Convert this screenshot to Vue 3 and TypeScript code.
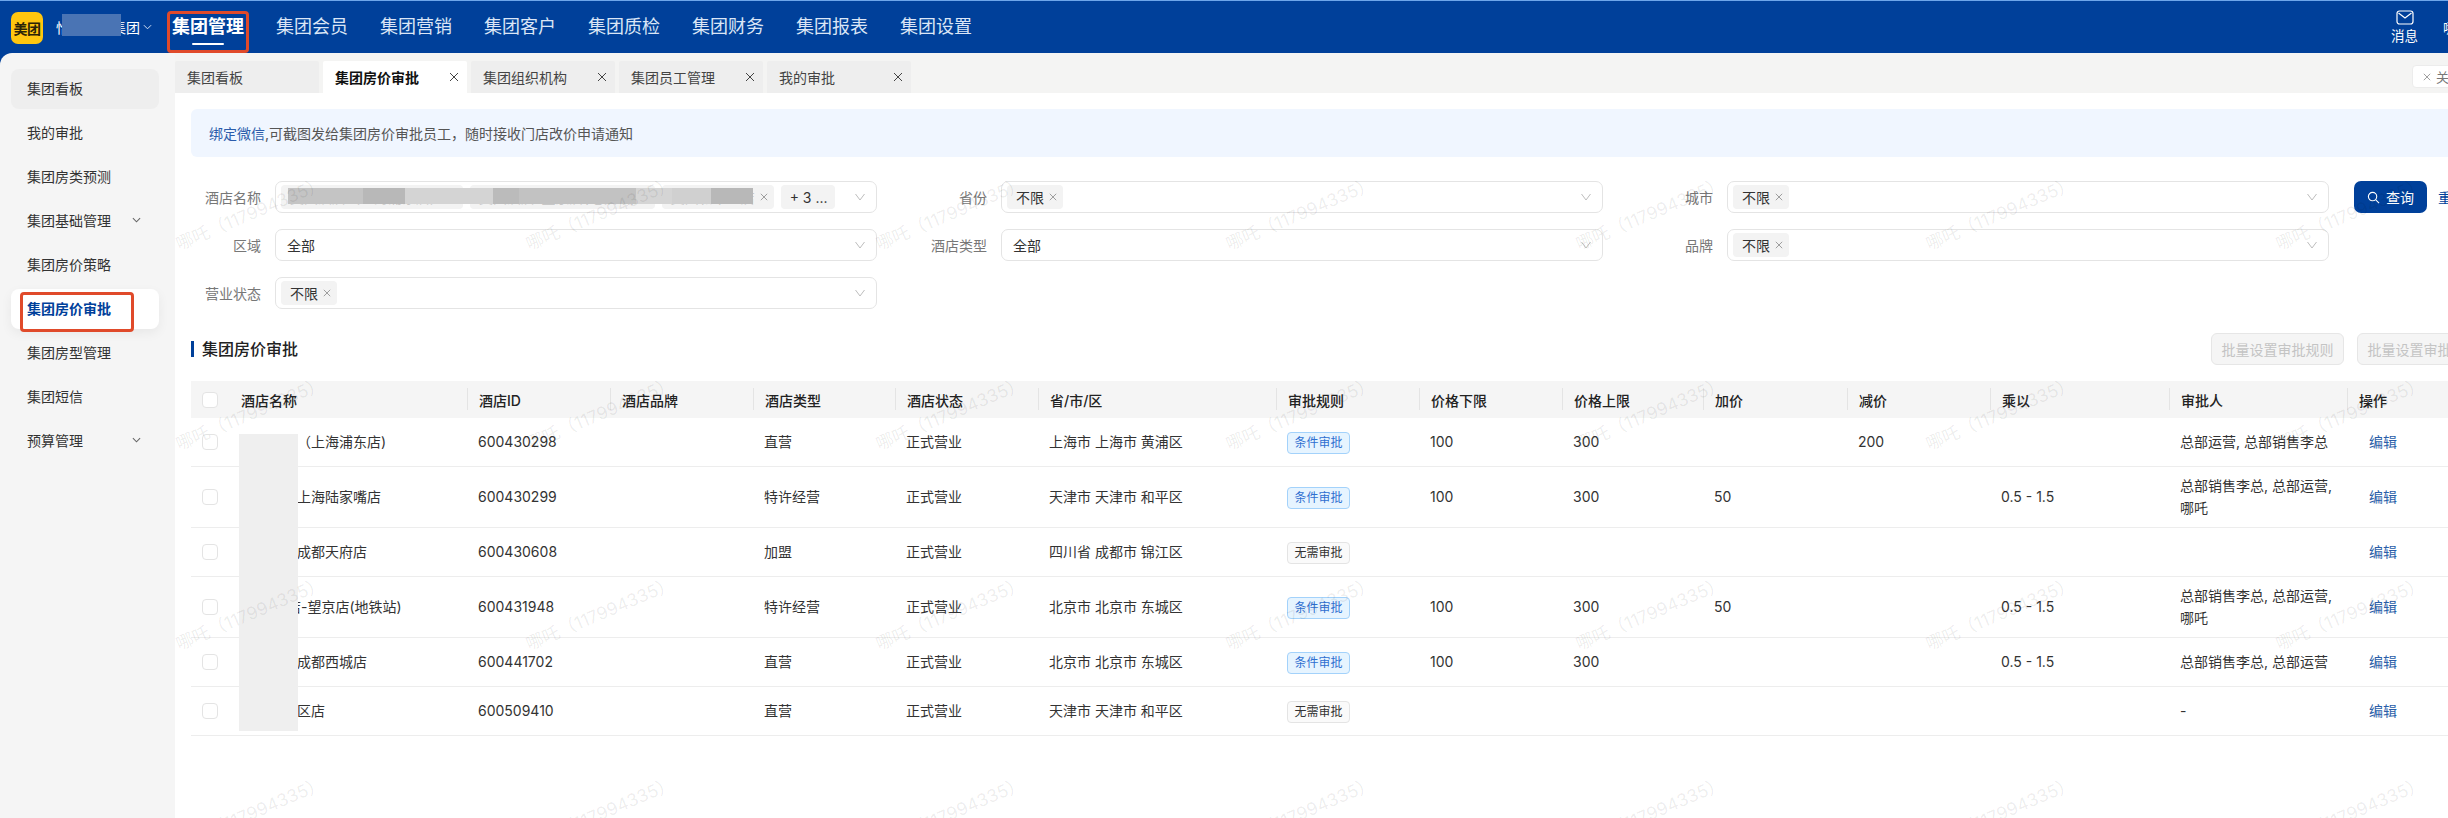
<script setup lang="ts">
const navItems: string[] = ['集团会员', '集团营销', '集团客户', '集团质检', '集团财务', '集团报表', '集团设置']

interface MenuItem { label: string; arrow?: boolean; state?: 'soft' | 'active' }
const menu: MenuItem[] = [
  { label: '集团看板', state: 'soft' },
  { label: '我的审批' },
  { label: '集团房类预测' },
  { label: '集团基础管理', arrow: true },
  { label: '集团房价策略' },
  { label: '集团房价审批', state: 'active' },
  { label: '集团房型管理' },
  { label: '集团短信' },
  { label: '预算管理', arrow: true },
]

const tabs = [
  { label: '集团看板', close: false, active: false },
  { label: '集团房价审批', close: true, active: true },
  { label: '集团组织机构', close: true, active: false },
  { label: '集团员工管理', close: true, active: false },
  { label: '我的审批', close: true, active: false },
]

const columns = [
  { label: '', width: 38 },
  { label: '酒店名称', width: 238 },
  { label: '酒店ID', width: 143 },
  { label: '酒店品牌', width: 143 },
  { label: '酒店类型', width: 142 },
  { label: '酒店状态', width: 143 },
  { label: '省/市/区', width: 238 },
  { label: '审批规则', width: 143 },
  { label: '价格下限', width: 143 },
  { label: '价格上限', width: 141 },
  { label: '加价', width: 144 },
  { label: '减价', width: 143 },
  { label: '乘以', width: 179 },
  { label: '审批人', width: 178 },
  { label: '操作', width: 143 },
]

interface Row {
  name: string; id: string; type: string; region: string; cond: boolean
  low: string; high: string; add: string; sub: string; mult: string; approver: string
}
const rows: Row[] = [
  { name: '美团酒店（上海浦东店)', id: '600430298', type: '直营', region: '上海市 上海市 黄浦区', cond: true, low: '100', high: '300', add: '', sub: '200', mult: '', approver: '总部运营, 总部销售李总' },
  { name: '美团酒店上海陆家嘴店', id: '600430299', type: '特许经营', region: '天津市 天津市 和平区', cond: true, low: '100', high: '300', add: '50', sub: '', mult: '0.5 - 1.5', approver: '总部销售李总, 总部运营, 哪吒' },
  { name: '美团酒店成都天府店', id: '600430608', type: '加盟', region: '四川省 成都市 锦江区', cond: false, low: '', high: '', add: '', sub: '', mult: '', approver: '' },
  { name: '美团 酒店-望京店(地铁站)', id: '600431948', type: '特许经营', region: '北京市 北京市 东城区', cond: true, low: '100', high: '300', add: '50', sub: '', mult: '0.5 - 1.5', approver: '总部销售李总, 总部运营, 哪吒' },
  { name: '美团酒店成都西城店', id: '600441702', type: '直营', region: '北京市 北京市 东城区', cond: true, low: '100', high: '300', add: '', sub: '', mult: '0.5 - 1.5', approver: '总部销售李总, 总部运营' },
  { name: '美团和平区店', id: '600509410', type: '直营', region: '天津市 天津市 和平区', cond: false, low: '', high: '', add: '', sub: '', mult: '', approver: '-' },
]

const watermarks: number[] = Array.from({ length: 32 }, (_, i) => i)
</script>

<template>
  <div class="app">
    <header class="topbar">
      <div class="logo">美团</div>
      <div class="company">
        <span>怡美酒店集团</span>
        <i class="company-mask"></i>
        <svg class="company-arrow" viewBox="0 0 10 6"><path d="M1 1l4 4 4-4" /></svg>
      </div>
      <nav class="nav">
        <span class="nav-item nav-active">集团管理</span>
        <span v-for="item in navItems" :key="item" class="nav-item">{{ item }}</span>
      </nav>
      <div class="top-right">
        <div class="msg">
          <svg class="mail" viewBox="0 0 18 15">
            <rect x="1" y="1" width="16" height="13" rx="2.5" />
            <path d="M2.5 3l6.5 5 6.5-5" />
          </svg>
          <span>消息</span>
        </div>
        <span class="user">哪吒</span>
      </div>
    </header>

    <div class="body">
      <aside class="sidebar">
        <div
          v-for="item in menu"
          :key="item.label"
          class="menu-item"
          :class="item.state ? 'menu-' + item.state : ''"
        >
          <span>{{ item.label }}</span>
          <svg v-if="item.arrow" class="menu-arrow" viewBox="0 0 10 6"><path d="M1 1l4 4 4-4" /></svg>
          <i v-if="item.state === 'active'" class="menu-outline"></i>
        </div>
      </aside>

      <main class="main">
        <div class="tabs">
          <div v-for="tab in tabs" :key="tab.label" class="tab" :class="{ 'tab-active': tab.active }">
            <span>{{ tab.label }}</span>
            <svg v-if="tab.close" class="x tab-x" viewBox="0 0 10 10"><path d="M1 1l8 8M9 1l-8 8" /></svg>
          </div>
          <div class="close-all">
            <svg class="x" viewBox="0 0 10 10"><path d="M1 1l8 8M9 1l-8 8" /></svg>
            <span>关闭全部</span>
          </div>
        </div>

        <div class="content">
          <div class="notice">
            <a class="notice-link">绑定微信</a>,可截图发给集团房价审批员工，随时接收门店改价申请通知
          </div>

          <div class="filters">
            <div class="field">
              <label>酒店名称</label>
              <div class="select">
                <span class="tag tag-masked">美团酒店（上海浦东店）<svg class="x" viewBox="0 0 10 10"><path d="M1 1l8 8M9 1l-8 8" /></svg></span>
                <span class="tag tag-masked">美团酒店-望京店(地铁站)<svg class="x" viewBox="0 0 10 10"><path d="M1 1l8 8M9 1l-8 8" /></svg></span>
                <span class="tag tag-masked">美团和平区店<svg class="x" viewBox="0 0 10 10"><path d="M1 1l8 8M9 1l-8 8" /></svg></span>
                <span class="tag tag-more">+ 3 ...</span>
                <i class="blur-band"></i>
                <svg class="chev" viewBox="0 0 10 8"><path d="M.5 1L5 7l4.500-6" /></svg>
              </div>
            </div>
            <div class="field">
              <label>省份</label>
              <div class="select">
                <span class="tag">不限<svg class="x" viewBox="0 0 10 10"><path d="M1 1l8 8M9 1l-8 8" /></svg></span>
                <svg class="chev" viewBox="0 0 10 8"><path d="M.5 1L5 7l4.500-6" /></svg>
              </div>
            </div>
            <div class="field">
              <label>城市</label>
              <div class="select">
                <span class="tag">不限<svg class="x" viewBox="0 0 10 10"><path d="M1 1l8 8M9 1l-8 8" /></svg></span>
                <svg class="chev" viewBox="0 0 10 8"><path d="M.5 1L5 7l4.500-6" /></svg>
              </div>
            </div>
            <div class="actions">
              <button class="btn-primary">
                <svg class="search" viewBox="0 0 14 14">
                  <circle cx="6" cy="6" r="4.500" />
                  <path d="M9.500 9.500L13 13" />
                </svg>
                查询
              </button>
              <a class="reset">重置</a>
            </div>

            <div class="field">
              <label>区域</label>
              <div class="select">
                <span class="value">全部</span>
                <svg class="chev" viewBox="0 0 10 8"><path d="M.5 1L5 7l4.500-6" /></svg>
              </div>
            </div>
            <div class="field">
              <label>酒店类型</label>
              <div class="select">
                <span class="value">全部</span>
                <svg class="chev" viewBox="0 0 10 8"><path d="M.5 1L5 7l4.500-6" /></svg>
              </div>
            </div>
            <div class="field">
              <label>品牌</label>
              <div class="select">
                <span class="tag">不限<svg class="x" viewBox="0 0 10 10"><path d="M1 1l8 8M9 1l-8 8" /></svg></span>
                <svg class="chev" viewBox="0 0 10 8"><path d="M.5 1L5 7l4.500-6" /></svg>
              </div>
            </div>
            <div class="spacer"></div>

            <div class="field">
              <label>营业状态</label>
              <div class="select">
                <span class="tag">不限<svg class="x" viewBox="0 0 10 10"><path d="M1 1l8 8M9 1l-8 8" /></svg></span>
                <svg class="chev" viewBox="0 0 10 8"><path d="M.5 1L5 7l4.500-6" /></svg>
              </div>
            </div>
          </div>

          <div class="title-row">
            <h2 class="title">集团房价审批</h2>
            <div class="title-btns">
              <button class="btn-disabled" disabled>批量设置审批规则</button>
              <button class="btn-disabled" disabled>批量设置审批人员</button>
            </div>
          </div>

          <div class="table-wrap">
            <table class="table">
              <colgroup>
                <col v-for="(c, i) in columns" :key="i" :style="{ width: c.width + 'px' }" />
              </colgroup>
              <thead>
                <tr>
                  <th class="check-cell"><span class="check"></span></th>
                  <th v-for="c in columns.slice(1)" :key="c.label">{{ c.label }}</th>
                </tr>
              </thead>
              <tbody>
                <tr v-for="r in rows" :key="r.id">
                  <td class="check-cell"><span class="check"></span></td>
                  <td class="nowrap">{{ r.name }}</td>
                  <td>{{ r.id }}</td>
                  <td></td>
                  <td>{{ r.type }}</td>
                  <td>正式营业</td>
                  <td>{{ r.region }}</td>
                  <td>
                    <span class="rule" :class="r.cond ? 'rule-on' : 'rule-off'">{{ r.cond ? '条件审批' : '无需审批' }}</span>
                  </td>
                  <td>{{ r.low }}</td>
                  <td>{{ r.high }}</td>
                  <td>{{ r.add }}</td>
                  <td>{{ r.sub }}</td>
                  <td>{{ r.mult }}</td>
                  <td>{{ r.approver }}</td>
                  <td class="edit-cell"><a class="edit">编辑</a></td>
                </tr>
              </tbody>
            </table>
            <i class="name-mask"></i>
          </div>
        </div>

        <div class="watermark">
          <div class="wm-grid">
            <span v-for="n in watermarks" :key="n" class="wm-cell"><span class="wm-text">哪吒（117994335）</span></span>
          </div>
        </div>
      </main>
    </div>
  </div>
</template>

<style>
html, body { margin: 0; padding: 0; background: #fff; }
</style>

<style scoped>
.app {
  width: 2448px;
  height: 818px;
  overflow: hidden;
  display: flex;
  flex-direction: column;
  font-family: Inter, "Noto Sans CJK SC", sans-serif;
  font-size: 14px;
  color: #333;
  background: #00409a;
}
.topbar {
  height: 53px;
  box-sizing: border-box;
  border-top: 1px solid #6ea6ea;
  background: #00409a;
  display: flex;
  align-items: center;
  padding-left: 11px;
  color: #fff;
  flex: none;
}
.logo {
  width: 32px;
  height: 32px;
  margin-top: 1px;
  border-radius: 7px;
  background: #ffc60f;
  color: #2b2408;
  font-size: 14px;
  font-weight: 700;
  display: flex;
  align-items: center;
  justify-content: center;
  letter-spacing: -0.5px;
}
.company {
  position: relative;
  margin-left: 13px;
  display: flex;
  align-items: center;
  font-size: 14px;
  white-space: nowrap;
}
.company-mask {
  position: absolute;
  left: 6px;
  top: -3px;
  width: 59px;
  height: 22px;
  background: #4a74b4;
}
.company-arrow {
  width: 9px;
  height: 6px;
  margin-left: 3px;
  fill: none;
  stroke: #d6e2f5;
  stroke-width: 1.1;
}
.nav {
  display: flex;
  gap: 32px;
  margin-left: 20px;
  font-size: 18px;
  color: #dbe6f6;
}
.nav-item {
  position: relative;
  white-space: nowrap;
  line-height: 26px;
}
.nav-active {
  color: #fff;
  font-weight: 700;
}
.nav-active::before {
  content: "";
  position: absolute;
  left: -5px;
  right: -5px;
  top: -3px;
  height: 42px;
  box-sizing: border-box;
  border: 3px solid #e04a2a;
  border-radius: 4px;
}
.nav-active::after {
  content: "";
  position: absolute;
  left: 20px;
  width: 32px;
  top: 29px;
  height: 2px;
  background: #fff;
  border-radius: 1px;
}
.top-right {
  margin-left: auto;
  margin-right: -23px;
  display: flex;
  align-items: center;
  gap: 25px;
}
.msg {
  width: 27px;
  display: flex;
  flex-direction: column;
  align-items: center;
  white-space: nowrap;
  font-size: 13.5px;
  line-height: 18px;
}
.mail {
  width: 18px;
  height: 15px;
  margin-bottom: 2px;
  fill: none;
  stroke: #fff;
  stroke-width: 1.2;
}
.user {
  font-size: 14px;
  white-space: nowrap;
}
.body {
  flex: 1;
  display: flex;
  min-height: 0;
}
.sidebar {
  width: 175px;
  flex: none;
  background: #f5f5f5;
  border-top-left-radius: 12px;
  box-sizing: border-box;
  padding: 16px 16px 0 11px;
  display: flex;
  flex-direction: column;
  gap: 4px;
}
.menu-item {
  position: relative;
  height: 40px;
  box-sizing: border-box;
  display: flex;
  align-items: center;
  justify-content: space-between;
  padding: 0 18px 2px 16px;
  border-radius: 8px;
  color: #333;
  white-space: nowrap;
}
.menu-soft {
  background: #eeeeee;
}
.menu-active {
  background: #fff;
  color: #00409a;
  font-weight: 600;
  box-shadow: 0 4px 12px rgba(0, 0, 0, 0.06);
}
.menu-outline {
  position: absolute;
  left: 9px;
  top: 3px;
  width: 114px;
  height: 40px;
  box-sizing: border-box;
  border: 3px solid #e04a2a;
  border-radius: 4px;
}
.menu-arrow {
  width: 9px;
  height: 6px;
  fill: none;
  stroke: #666;
  stroke-width: 1.2;
}
.main {
  flex: 1;
  min-width: 0;
  position: relative;
  background: #fff;
  overflow: hidden;
}
.tabs {
  height: 40px;
  box-sizing: border-box;
  padding-top: 8px;
  background: #f4f4f3;
  display: flex;
  gap: 4px;
}
.tab {
  width: 144px;
  height: 32px;
  box-sizing: border-box;
  padding: 0 8px 0 12px;
  display: flex;
  align-items: center;
  justify-content: space-between;
  background: #eeeeee;
  color: #444;
  border-radius: 2px 2px 0 0;
  white-space: nowrap;
}
.tab-active {
  background: #fff;
  color: #111;
  font-weight: 600;
}
.x {
  width: 8px;
  height: 8px;
  fill: none;
  stroke: #888;
  stroke-width: 1;
  flex: none;
}
.tab-x {
  width: 10px;
  height: 10px;
  stroke: #444;
}
.close-all {
  margin-left: auto;
  margin-right: -44px;
  margin-top: 4px;
  width: 80px;
  height: 23px;
  box-sizing: border-box;
  background: #fff;
  border: 1px solid #ececec;
  border-radius: 4px;
  display: flex;
  align-items: center;
  gap: 5px;
  padding-left: 10px;
  font-size: 13px;
  color: #777;
  white-space: nowrap;
  overflow: hidden;
}
.content {
  width: 2299px;
  margin-left: 16px;
}
.notice {
  margin-top: 16px;
  height: 48px;
  display: flex;
  align-items: center;
  padding-left: 18px;
  background: #f0f6ff;
  border-radius: 6px 0 0 6px;
  color: #555;
  white-space: pre;
}
.notice-link {
  color: #2b5cab;
}
.filters {
  margin-top: 24px;
  display: grid;
  grid-template-columns: 726px 726px 711px 120px;
  row-gap: 16px;
}
.field {
  display: flex;
  align-items: center;
}
.field label {
  width: 84px;
  box-sizing: border-box;
  padding-right: 14px;
  text-align: right;
  color: #777;
  flex: none;
  white-space: nowrap;
}
.select {
  position: relative;
  width: 602px;
  height: 32px;
  box-sizing: border-box;
  border: 1px solid #e4e4e4;
  border-radius: 7px;
  background: #fff;
  display: flex;
  align-items: center;
  gap: 7px;
  padding: 0 11px 0 5px;
}
.tag {
  height: 24px;
  display: inline-flex;
  align-items: center;
  gap: 5px;
  padding: 0 6px 0 9px;
  background: #f3f3f3;
  border-radius: 4px;
  white-space: nowrap;
  color: #333;
  flex: none;
}
.tag-masked {
  color: #c8c8c8;
}
.tag-more {
  padding: 0 9px;
  width: 54px;
  box-sizing: border-box;
}
.value {
  padding-left: 6px;
  color: #333;
}
.chev {
  width: 10px;
  height: 8px;
  margin-left: auto;
  fill: none;
  stroke: #bdbdbd;
  stroke-width: 1;
  flex: none;
}
.blur-band {
  position: absolute;
  left: 12px;
  top: 6px;
  width: 465px;
  height: 16px;
  background: linear-gradient(
    90deg,
    #c4c4c4 0 75px,
    #b8b8b8 75px 117px,
    #d4d4d4 117px 205px,
    #bbbbbb 205px 231px,
    #c2c2c2 231px 348px,
    #d5d5d5 348px 384px,
    #d0d0d0 384px 423px,
    #b8b8b8 423px 465px
  );
}
.actions {
  display: flex;
  align-items: center;
  gap: 11px;
  white-space: nowrap;
}
.btn-primary {
  width: 73px;
  height: 32px;
  border: none;
  border-radius: 7px;
  background: #00409a;
  color: #fff;
  font: inherit;
  display: flex;
  align-items: center;
  justify-content: center;
  gap: 6px;
  padding: 0;
  flex: none;
}
.search {
  width: 13px;
  height: 13px;
  fill: none;
  stroke: #fff;
  stroke-width: 1.2;
}
.reset {
  color: #00409a;
}
.title-row {
  margin-top: 24px;
  height: 32px;
  display: flex;
  align-items: center;
  justify-content: space-between;
}
.title {
  margin: 0;
  font-size: 16px;
  font-weight: 500;
  color: #222;
  border-left: 3px solid #00409a;
  padding-left: 8px;
  line-height: 16px;
}
.title-btns {
  display: flex;
  gap: 13px;
}
.btn-disabled {
  width: 133px;
  height: 32px;
  box-sizing: border-box;
  padding: 0;
  font: inherit;
  background: #f5f5f5;
  border: 1px solid #e6e6e6;
  border-radius: 6px;
  color: #c4c4c4;
  white-space: nowrap;
}
.table-wrap {
  position: relative;
  margin-top: 16px;
}
.table {
  width: 2299px;
  table-layout: fixed;
  border-collapse: separate;
  border-spacing: 0;
}
.table th {
  position: relative;
  height: 37px;
  box-sizing: border-box;
  padding: 0 12px;
  background: #f5f5f5;
  font-weight: 500;
  color: #222;
  text-align: left;
  white-space: nowrap;
}
.table th:not(:nth-child(-n + 2))::before {
  content: "";
  position: absolute;
  left: 0;
  top: 7px;
  width: 1px;
  height: 22px;
  background: #e4e4e4;
}
.table td {
  height: 49px;
  box-sizing: border-box;
  padding: 8px 10px 8px 11px;
  line-height: 22px;
  border-bottom: 1px solid #ededed;
  color: #333;
}
.table td:nth-child(2) {
  padding-left: 12px;
}
.table .check-cell {
  padding: 0 0 0 11px;
}
.check {
  display: block;
  width: 16px;
  height: 16px;
  box-sizing: border-box;
  border: 1px solid #e4e4e4;
  border-radius: 4px;
  background: #fff;
}
.nowrap {
  white-space: nowrap;
  overflow: hidden;
}
.rule {
  display: inline-block;
  vertical-align: top;
  width: 63px;
  height: 22px;
  margin-top: 1px;
  box-sizing: border-box;
  border-radius: 4px;
  border: 1px solid;
  font-size: 12px;
  line-height: 20px;
  text-align: center;
}
.rule-on {
  color: #2f6fd0;
  background: #e6f4ff;
  border-color: #a3d2fb;
}
.rule-off {
  color: #333;
  background: #fafafa;
  border-color: #e4e4e4;
}
.table .edit-cell {
  padding-left: 22px;
}
.edit {
  color: #2a5ea8;
}
.name-mask {
  position: absolute;
  left: 48px;
  top: 53px;
  width: 59px;
  height: 297px;
  background: #efefef;
}
.watermark {
  position: absolute;
  left: 0;
  top: 40px;
  right: 0;
  bottom: 0;
  overflow: hidden;
  pointer-events: none;
}
.wm-grid {
  margin: 19px 0 0 -100px;
  width: 2800px;
  display: grid;
  grid-template-columns: repeat(8, 350px);
  grid-auto-rows: 200px;
}
.wm-cell {
  display: flex;
  align-items: center;
  justify-content: center;
}
.wm-text {
  transform: rotate(-23deg);
  font-size: 17.5px;
  color: rgba(0, 0, 0, 0.08);
  white-space: nowrap;
}
</style>
